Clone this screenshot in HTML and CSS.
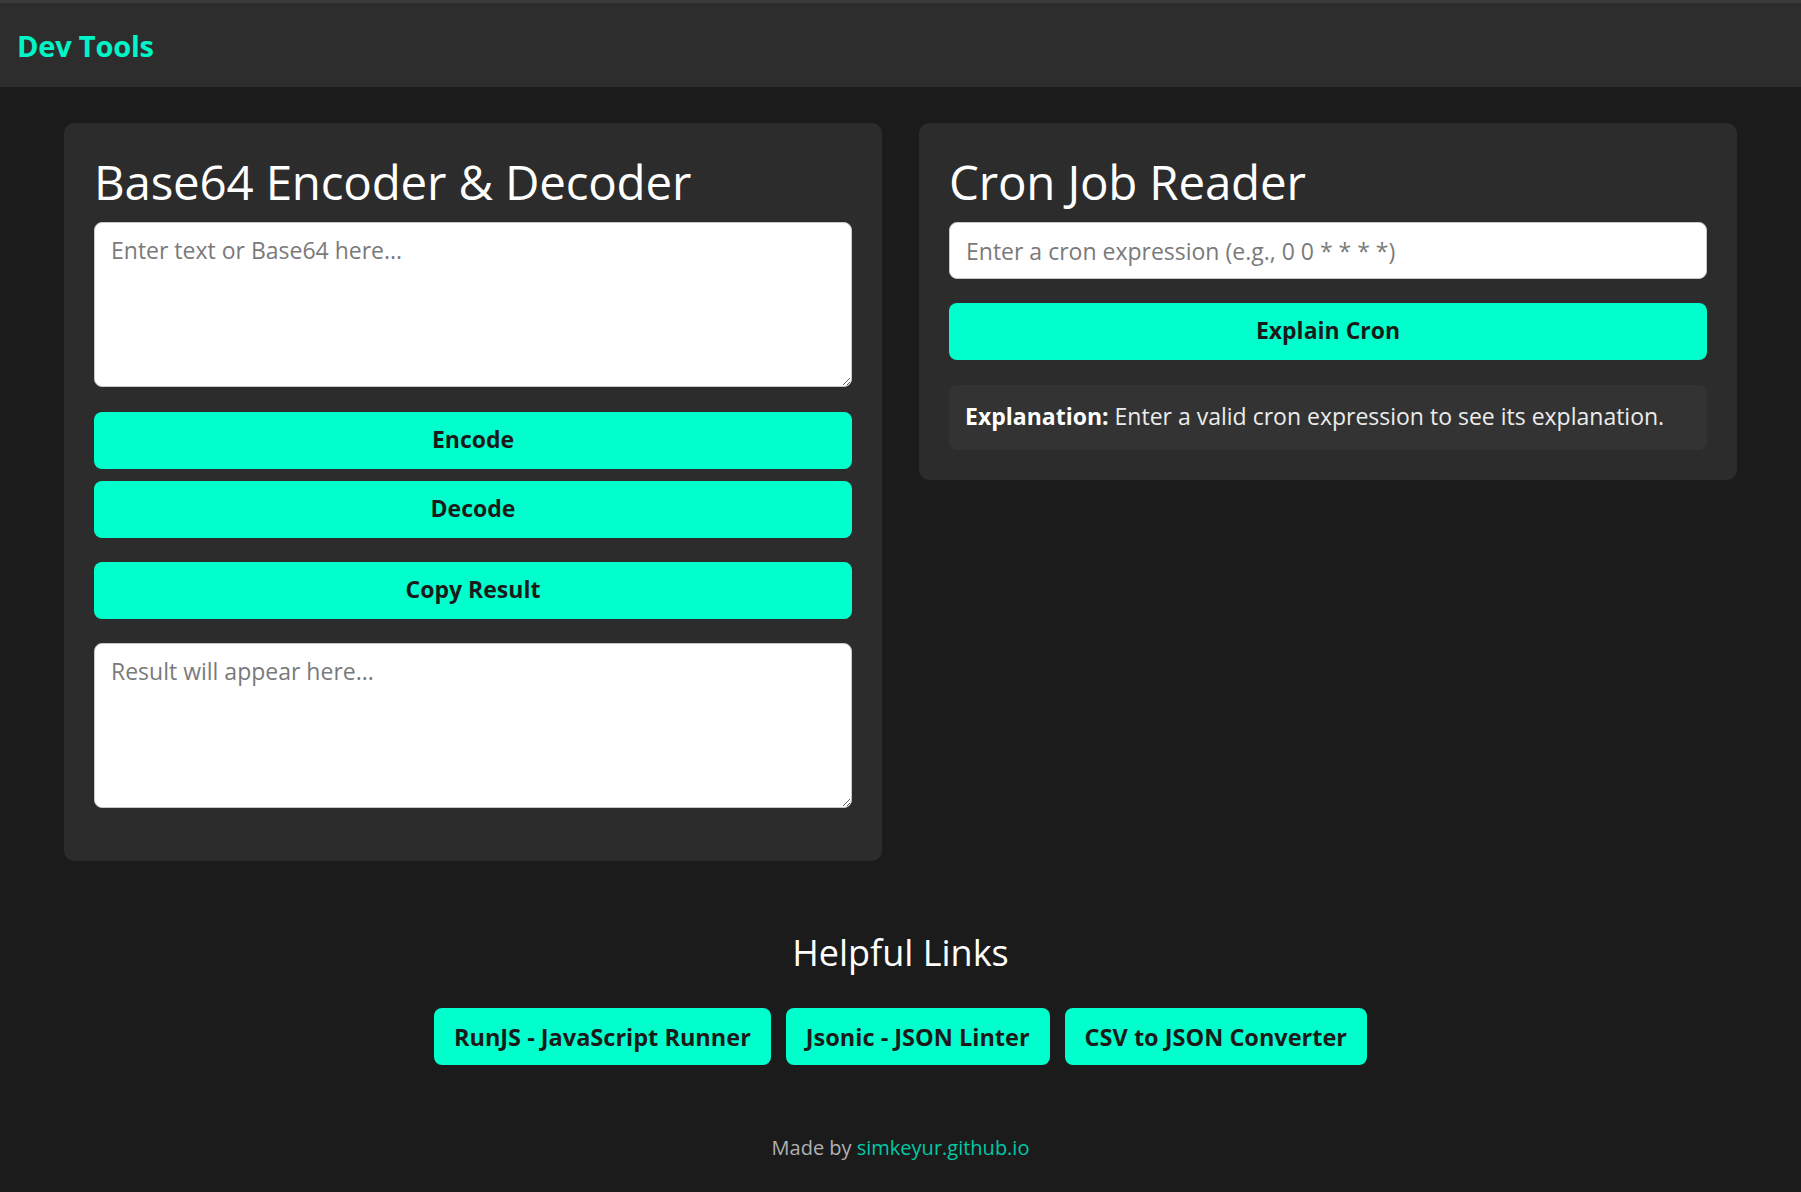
FILE: index.html
```html
<!DOCTYPE html>
<html lang="en">
<head>
<meta charset="utf-8">
<title>Dev Tools</title>
<link rel="stylesheet" href="styles.css">
</head>
<body>
<header class="topbar">
  <span class="brand">Dev Tools</span>
</header>
<main class="tools">
  <section class="card">
    <h2 class="card-title">Base64 Encoder &amp; Decoder</h2>
    <textarea class="field area" placeholder="Enter text or Base64 here..."></textarea>
    <button class="btn btn-encode">Encode</button>
    <button class="btn btn-decode">Decode</button>
    <button class="btn btn-copy">Copy Result</button>
    <textarea class="field area area-result" placeholder="Result will appear here..." readonly></textarea>
  </section>
  <section class="card">
    <h2 class="card-title">Cron Job Reader</h2>
    <input class="field line" type="text" placeholder="Enter a cron expression (e.g., 0 0 * * * *)">
    <button class="btn btn-explain">Explain Cron</button>
    <div class="explain"><strong>Explanation:</strong> Enter a valid cron expression to see its explanation.</div>
  </section>
</main>
<section class="links">
  <h3 class="links-title">Helpful Links</h3>
  <div class="links-row">
    <a class="link-btn" href="#">RunJS - JavaScript Runner</a>
    <a class="link-btn" href="#">Jsonic - JSON Linter</a>
    <a class="link-btn" href="#">CSV to JSON Converter</a>
  </div>
</section>
<footer class="foot">Made by <a class="foot-link" href="#">simkeyur.github.io</a></footer>
</body>
</html>
```
FILE: styles.css
```css
* { box-sizing: border-box; }
html, body { margin: 0; padding: 0; }
body {
  background: #1b1b1b;
  color: #ffffff;
  font-family: "Open Sans", "Noto Sans", "DejaVu Sans", sans-serif;
}
.topbar {
  height: 87px;
  background: #2d2d2d;
  border-top: 3px solid #3b3b3b;
  display: flex;
  align-items: center;
  padding: 0 17px;
}
.brand {
  color: #00f5c8;
  font-size: 29px;
  font-weight: 700;
  letter-spacing: -0.2px;
}
.tools {
  display: grid;
  grid-template-columns: 1fr 1fr;
  gap: 37px;
  align-items: start;
  padding: 36px 64px 0 64px;
}
.card {
  background: #2c2c2c;
  border-radius: 10px;
  padding: 30px;
  display: flex;
  flex-direction: column;
}
.card-title {
  margin: 0 0 12px 0;
  font-size: 47.5px;
  font-weight: 400;
  line-height: 57px;
  letter-spacing: -0.2px;
}
.field {
  display: block;
  width: 100%;
  background: #ffffff;
  border: 1px solid #c8c8c8;
  border-radius: 8px;
  font-family: inherit;
  font-size: 23px;
  color: #222;
  padding: 11px 16px;
  margin: 0 0 25px 0;
}
.field::placeholder { color: #7a7a7a; }
.area { height: 165px; resize: vertical; }
.area-result { margin-bottom: 23px; }
.line { height: 57px; margin-bottom: 24px; }
.btn {
  display: block;
  width: 100%;
  height: 57px;
  border: none;
  border-radius: 8px;
  background: #00ffcc;
  color: #1a1a1a;
  font-family: inherit;
  font-size: 23px;
  font-weight: 700;
  margin: 0 0 25px 0;
  padding: 0 0 3px 0;
}
.btn-encode { margin-bottom: 12px; }
.btn-decode { margin-bottom: 24px; }
.btn-copy { margin-bottom: 24px; }
.explain {
  background: #333333;
  border-radius: 8px;
  height: 65px;
  display: flex;
  align-items: center;
  padding: 0 16px 4px 16px;
  font-size: 23px;
  color: #ececec;
}
.explain strong { margin-right: 6px; color: #ffffff; }
.links {
  text-align: center;
  padding-top: 70px;
}
.links-title {
  margin: 0 0 33px 0;
  font-size: 36px;
  font-weight: 400;
  line-height: 44px;
}
.links-row {
  display: flex;
  justify-content: center;
  gap: 15px;
}
.link-btn {
  display: flex;
  align-items: center;
  height: 57px;
  padding: 0 20px;
  background: #00ffcc;
  color: #1a1a1a;
  border-radius: 8px;
  text-decoration: none;
  font-size: 23.5px;
  font-weight: 700;
}
.foot {
  text-align: center;
  color: #b0b0b0;
  font-size: 20px;
  padding-top: 69px;
}
.foot-link { color: #00c9a7; text-decoration: none; }
```
